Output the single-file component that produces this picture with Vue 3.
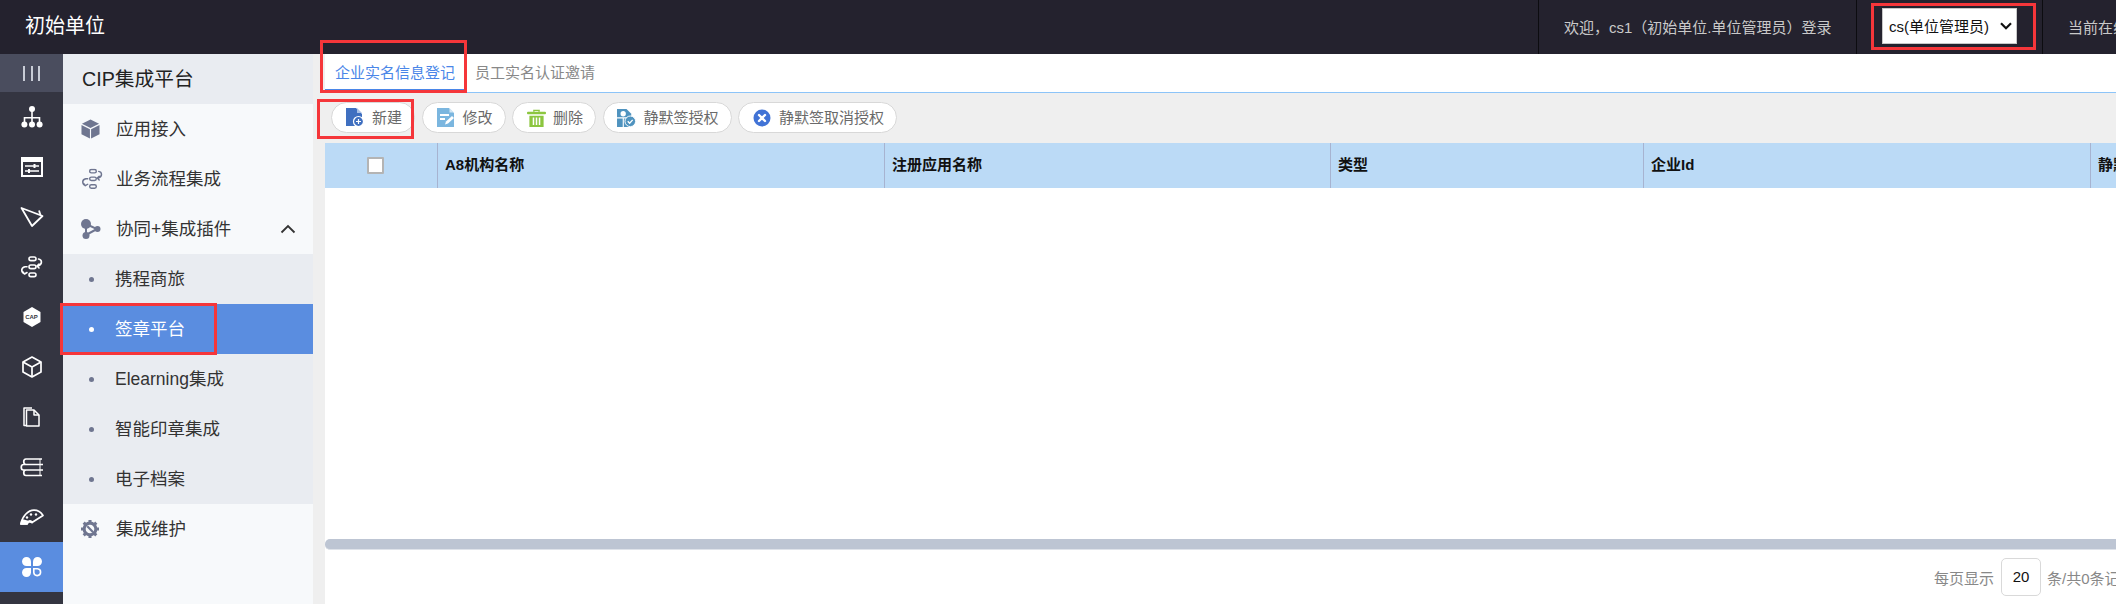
<script setup>
const subItems = [
  { label: '携程商旅' },
  { label: '签章平台', active: true },
  { label: 'Elearning集成' },
  { label: '智能印章集成' },
  { label: '电子档案' },
]
const columns = [
  { label: 'A8机构名称', width: 447 },
  { label: '注册应用名称', width: 446 },
  { label: '类型', width: 313 },
  { label: '企业Id', width: 447 },
  { label: '静默签授权状态', width: 300 },
]
</script>

<template>
  <div class="page">
    <header class="topbar">
      <div class="brand">初始单位</div>
      <div class="cell welcome">欢迎，cs1（初始单位.单位管理员）登录</div>
      <div class="cell role">
        <div class="select-wrap">
          <select class="role-select">
            <option>cs(单位管理员)</option>
          </select>
          <svg class="select-arrow" viewBox="0 0 12 8" width="12" height="8" fill="none" stroke="#111" stroke-width="2.200">
            <path d="M1 1.200 6 6.200l5-5" />
          </svg>
        </div>
      </div>
      <div class="cell online">当前在线人数</div>
    </header>

    <div class="body">
      <nav class="rail">
        <div class="rail-toggle"><i></i><i></i><i></i></div>

        <div class="rail-item">
          <svg viewBox="0 0 22 22" width="22" height="22" fill="none" stroke="#fff" stroke-width="1.6">
            <circle cx="11" cy="3" r="3" fill="#fff" stroke="none" />
            <path d="M11 5v6M3.500 16v-4.200h15V16M11 11v5" />
            <circle cx="3.400" cy="18.400" r="3" fill="#fff" stroke="none" />
            <circle cx="11" cy="18.400" r="3" fill="#fff" stroke="none" />
            <circle cx="18.600" cy="18.400" r="3" fill="#fff" stroke="none" />
          </svg>
        </div>
        <div class="rail-item">
          <svg viewBox="0 0 22 20" width="22" height="20" fill="none">
            <rect x="0" y="0" width="22" height="20" fill="#fff" />
            <rect x="2" y="5" width="18" height="13" fill="#343541" />
            <path d="M4 9h14M4 14h14" stroke="#fff" stroke-width="1.400" />
            <path d="M13.500 7v4M8 12v4" stroke="#fff" stroke-width="2" />
          </svg>
        </div>
        <div class="rail-item">
          <svg viewBox="0 0 24 22" width="24" height="22" fill="none" stroke="#fff" stroke-width="1.800" stroke-linejoin="round">
            <path d="M1.500 2 22.500 10 12 20Z" />
            <path d="M19 4.500 20.500 9" />
          </svg>
        </div>
        <div class="rail-item">
          <svg viewBox="0 0 24 22" width="24" height="22" fill="none" stroke="#fff" stroke-width="1.600" stroke-linecap="round" stroke-linejoin="round">
            <rect x="9" y="1" width="7" height="3.600" rx="1.800" />
            <rect x="9" y="9" width="7" height="3.600" rx="1.800" />
            <rect x="9" y="17" width="7" height="3.600" rx="1.800" />
            <path d="M18.500 3c3.500.5 4.500 5-.5 7h-1M19 8l-2 2 2 2" />
            <path d="M7 10.800h-2c-4.500 1-4 5.500-.5 7M2.500 15.500l2 2.500 2.500-1.500" />
          </svg>
        </div>
        <div class="rail-item">
          <div class="cap-mark">
            <svg viewBox="0 0 18 20" width="18" height="20"><path d="M9 0 17.500 5v10L9 20 .5 15V5Z" fill="#fff" /></svg>
            <span>CAP</span>
          </div>
        </div>
        <div class="rail-item">
          <svg viewBox="0 0 20 22" width="20" height="22" fill="none" stroke="#fff" stroke-width="1.700" stroke-linejoin="round">
            <path d="M10 1 19 6v10l-9 5-9-5V6Z" />
            <path d="M1 6l9 5 9-5M10 11v10" />
          </svg>
        </div>
        <div class="rail-item">
          <svg viewBox="0 0 17 20" width="17" height="20" fill="none" stroke="#fff" stroke-width="1.500" stroke-linejoin="round">
            <path d="M3 18.500H1V1h8" />
            <path d="M3.500 3H11l5 5v11H3.500Z" fill="#343541" />
            <path d="M11 3v5h5" />
          </svg>
        </div>
        <div class="rail-item">
          <svg viewBox="0 0 23 19" width="23" height="19" fill="none" stroke="#fff" stroke-width="1.700">
            <path d="M22 1H6C3 1 3 6.500 6 6.500M23 6.500H3.500C.5 6.500.5 12 3.500 12H23M6 12c-3 0-3 5.500 0 5.500h16" />
            <path d="M20 1v16.500" stroke-width="1" />
          </svg>
        </div>
        <div class="rail-item">
          <svg viewBox="0 0 24 16" width="24" height="16" fill="none" stroke="#fff" stroke-width="1.700" stroke-linejoin="round">
            <path d="M1 15C2 7.500 8 1.200 14 1.200c4 0 7 2 9 5.300l-11 7c-1-2-3.500-2-5 1.500Z" />
            <path d="M12 13.500c-1-2-3.500-2-5 1.500H1c.5-2 1-3 1.500-4Z" fill="#fff" />
            <circle cx="7" cy="8.500" r="1.200" fill="#fff" stroke="none" />
            <circle cx="11" cy="5.500" r="1.200" fill="#fff" stroke="none" />
            <circle cx="16" cy="5.500" r="1.200" fill="#fff" stroke="none" />
          </svg>
        </div>
        <div class="rail-item is-active">
          <svg viewBox="0 0 20 20" width="20" height="20" fill="#fff">
            <path d="M4.500 0C2 0 0 2 0 4.500S2 9 4.500 9H9V4.500C9 2 7 0 4.500 0Z" />
            <path d="M15.500 0C18 0 20 2 20 4.500S18 9 15.500 9H11V4.500C11 2 13 0 15.500 0Z" />
            <path d="M4.500 20C2 20 0 18 0 15.500S2 11 4.500 11H9v4.500C9 18 7 20 4.500 20Z" />
            <path d="M11.800 11.800h3.700a3.400 3.400 0 1 1-3.700 3.700Z" fill="none" stroke="#fff" stroke-width="1.600" />
          </svg>
        </div>
      </nav>

      <aside class="menu">
        <div class="menu-title">CIP集成平台</div>

        <div class="menu-row">
          <svg class="menu-icon" viewBox="0 0 20 21" width="19" height="20" fill="#6f7690">
            <path d="M10 .5 19 5l-9 4.500L1 5Z" />
            <path d="M.5 6.300 9.400 10.800V20.500L.5 16Z" />
            <path d="M19.500 6.300 10.600 10.800V20.500L19.500 16Z" />
          </svg>
          <span>应用接入</span>
        </div>
        <div class="menu-row">
          <svg class="menu-icon" viewBox="0 0 24 22" width="23" height="21" fill="none" stroke="#6f7690" stroke-width="1.500" stroke-linecap="round" stroke-linejoin="round">
            <rect x="9" y="1" width="7" height="3.600" rx="1.800" />
            <rect x="9" y="9" width="7" height="3.600" rx="1.800" />
            <rect x="9" y="17" width="7" height="3.600" rx="1.800" />
            <path d="M18.500 3c3.500.5 4.500 5-.5 7h-1M19 8l-2 2 2 2" />
            <path d="M7 10.800h-2c-4.500 1-4 5.500-.5 7M2.500 15.500l2 2.500 2.500-1.500" />
          </svg>
          <span>业务流程集成</span>
        </div>
        <div class="menu-row">
          <svg class="menu-icon" viewBox="0 0 20 20" width="20" height="20" fill="#6f7690" stroke="#6f7690">
            <path d="M5 5 16 10 5 16Z" fill="none" stroke-width="2" />
            <circle cx="5" cy="5" r="5" stroke="none" />
            <circle cx="16.500" cy="10" r="3" stroke="none" />
            <circle cx="5" cy="16.500" r="3.500" stroke="none" />
          </svg>
          <span>协同+集成插件</span>
          <svg class="chevron" viewBox="0 0 16 10" width="16" height="10" fill="none" stroke="#333" stroke-width="1.800">
            <path d="M1.500 8.500 8 2l6.500 6.500" />
          </svg>
        </div>

        <div class="submenu">
          <div v-for="item in subItems" :key="item.label" class="sub-row" :class="{ 'is-active': item.active }">
            <i class="dot"></i>
            <span>{{ item.label }}</span>
          </div>
        </div>

        <div class="menu-row">
          <svg class="menu-icon" viewBox="0 0 20 20" width="18" height="18" fill="none" stroke="#6f7690">
            <circle cx="10" cy="10" r="6.500" stroke-width="3.400" />
            <path d="M10 0v4M10 16v4M0 10h4M16 10h4M3 3l2.800 2.800M14.200 14.200 17 17M17 3l-2.800 2.800M5.800 14.200 3 17" stroke-width="3.400" />
            <path d="M7 7l6.500 6.500" stroke-width="2.400" />
          </svg>
          <span>集成维护</span>
        </div>
      </aside>

      <main class="main">
        <div class="tabs">
          <div class="tab is-active">企业实名信息登记</div>
          <div class="tab">员工实名认证邀请</div>
        </div>

        <div class="toolbar">
          <button class="tool" type="button">
            <span class="tool-icon">
              <svg viewBox="0 0 18 19" width="18" height="19">
                <path d="M0 0h10l6 6v12H0Z" fill="#3f6fc0" />
                <path d="M11 0v5h5Z" fill="#a9c0e6" />
                <circle cx="12.500" cy="13.500" r="5" fill="#3f6fc0" stroke="#fff" stroke-width="1.200" />
                <path d="M12.500 11v5M10 13.500h5" stroke="#fff" stroke-width="1.200" />
              </svg>
            </span>
            <span>新建</span>
          </button>
          <button class="tool" type="button">
            <span class="tool-icon">
              <svg viewBox="0 0 18 19" width="18" height="19">
                <path d="M0 0h12l5 5v14H0Z" fill="#7bb6df" />
                <path d="M12.500 0v4.500H17Z" fill="#d2e6f4" />
                <path d="M3 7h9M3 11h5" stroke="#fff" stroke-width="1.800" />
                <path d="M8 16.500l1-3L15 8l2 2-6 5.500Z" fill="#fff" />
              </svg>
            </span>
            <span>修改</span>
          </button>
          <button class="tool" type="button">
            <span class="tool-icon">
              <svg viewBox="0 0 20 19" width="19" height="18" fill="#8cc63f">
                <rect x="0" y="3" width="20" height="2.500" rx="1" />
                <path d="M6.500 3V.8h7V3h-1.600V2.200H8V3Z" />
                <path d="M2.500 7h15v12h-15ZM6 9v8h1.600V9Zm3.200 0v8h1.600V9Zm3.200 0v8H14V9Z" fill-rule="evenodd" />
              </svg>
            </span>
            <span>删除</span>
          </button>
          <button class="tool" type="button">
            <span class="tool-icon">
              <svg viewBox="0 0 20 19" width="19" height="18">
                <path d="M0 0h10l5 5v14H0Z" fill="#4f93bf" />
                <circle cx="6.500" cy="5" r="2.800" fill="#fff" />
                <path d="M0 8.800h15V10H0ZM6 10h1.200v9H6Z" fill="#fff" />
                <circle cx="14" cy="13" r="5.600" fill="#4f93bf" stroke="#fff" stroke-width="1" />
                <path d="M11.300 13l2 2 3.200-3.500" fill="none" stroke="#fff" stroke-width="1.400" />
              </svg>
            </span>
            <span>静默签授权</span>
          </button>
          <button class="tool" type="button">
            <span class="tool-icon">
              <svg viewBox="0 0 18 18" width="18" height="18">
                <circle cx="9" cy="9" r="8.500" fill="#4173d6" />
                <path d="M6 6l6 6M12 6l-6 6" stroke="#fff" stroke-width="2.400" stroke-linecap="round" />
              </svg>
            </span>
            <span>静默签取消授权</span>
          </button>
        </div>

        <div class="table-head">
          <div class="check-col"><i class="checkbox"></i></div>
          <div
            v-for="col in columns"
            :key="col.label"
            class="head-cell"
            :style="{ width: col.width + 'px' }"
          >{{ col.label }}</div>
        </div>

        <div class="table-body">
          <div class="scrollbar"></div>
        </div>

        <div class="pager">
          <span>每页显示</span>
          <span class="page-size">20</span>
          <span>条/共0条记录</span>
        </div>
      </main>
    </div>

    <i class="mark mark-tab"></i>
    <i class="mark mark-new"></i>
    <i class="mark mark-role"></i>
    <i class="mark mark-menu"></i>
  </div>
</template>

<style>
html, body { margin: 0; padding: 0; overflow: hidden; }
</style>

<style scoped>
.page {
  position: relative;
  width: 2116px;
  height: 604px;
  overflow: hidden;
  display: flex;
  flex-direction: column;
  font-family: "Liberation Sans", "Noto Sans CJK SC", sans-serif;
  font-size: 15px;
  background: #fff;
}

.topbar {
  flex: 0 0 54px;
  display: flex;
  background: #24222e;
  color: #c9c9c9;
  white-space: nowrap;
}
.brand {
  flex: 1;
  padding-left: 25px;
  line-height: 52px;
  font-size: 20px;
  color: #fff;
}
.cell {
  display: flex;
  align-items: center;
  border-left: 1px solid #0c0c10;
  overflow: hidden;
  box-sizing: border-box;
  padding-bottom: 2px;
}
.welcome { width: 318px; padding-left: 25px; }
.role { width: 186px; padding-left: 25px; }
.online { width: 74px; padding-left: 25px; }
.select-wrap {
  position: relative;
  width: 135px;
  height: 36px;
}
.role-select {
  width: 100%;
  height: 100%;
  appearance: none;
  background: #fff;
  border: 1px solid #c8c8c8;
  border-radius: 0;
  color: #111;
  font: 15px "Liberation Sans", "Noto Sans CJK SC", sans-serif;
  padding: 0 0 0 6px;
  box-sizing: border-box;
}
.select-arrow {
  position: absolute;
  left: 118px;
  top: 14px;
  pointer-events: none;
}

.body {
  flex: 1;
  min-height: 0;
  display: flex;
}

.rail {
  flex: 0 0 63px;
  background: #343541;
  display: flex;
  flex-direction: column;
}
.rail-toggle {
  flex: 0 0 38px;
  background: #4a4d5e;
  display: flex;
  align-items: center;
  justify-content: center;
  gap: 5.500px;
}
.rail-toggle i {
  width: 2px;
  height: 15px;
  background: #c8ccd6;
}
.rail-item {
  flex: 0 0 50px;
  display: flex;
  align-items: center;
  justify-content: center;
}
.rail-item.is-active { background: #5a8de0; }
.cap-mark {
  position: relative;
  width: 18px;
  height: 20px;
}
.cap-mark span {
  position: absolute;
  left: 0;
  right: 0;
  top: 5px;
  text-align: center;
  font-size: 6px;
  line-height: 10px;
  font-weight: 700;
  color: #343541;
}

.menu {
  flex: 0 0 250px;
  background: #f7f9fb;
  color: #333;
  font-size: 17.500px;
}
.menu-title {
  height: 50px;
  line-height: 50px;
  padding-left: 19px;
  background: #e9ecf1;
  font-size: 19.700px;
  color: #222;
}
.menu-row {
  position: relative;
  height: 50px;
  display: flex;
  align-items: center;
  padding-left: 53px;
  padding-bottom: 3px;
  box-sizing: border-box;
}
.menu-icon {
  position: absolute;
  left: 18px;
  top: 50%;
  transform: translateY(-50%);
}
.chevron {
  position: absolute;
  left: 217px;
  top: 20px;
}
.submenu { background: #e9ecf1; }
.sub-row {
  position: relative;
  height: 50px;
  display: flex;
  align-items: center;
  padding-left: 52px;
  padding-bottom: 3px;
  box-sizing: border-box;
}
.sub-row .dot {
  position: absolute;
  left: 26px;
  top: 22.500px;
  width: 5px;
  height: 5px;
  border-radius: 50%;
  background: #6f7690;
}
.sub-row.is-active {
  background: #5a8de0;
  color: #fff;
}
.sub-row.is-active .dot { background: #fff; }

.main {
  flex: 1;
  min-width: 0;
  background: #efefef;
  padding-left: 12px;
  display: flex;
  flex-direction: column;
}
.tabs {
  flex: 0 0 38px;
  display: flex;
  background: #fff;
  border-bottom: 1px solid #8cc4f8;
}
.tab {
  padding: 0 10px;
  line-height: 37px;
  color: #888;
  font-size: 15px;
}
.tab.is-active {
  color: #4a86e8;
  border-bottom: 3px solid #4a86e8;
  height: 35px;
}

.toolbar {
  flex: 0 0 50px;
  display: flex;
  align-items: center;
  gap: 6.500px;
  padding-left: 6px;
  padding-bottom: 1px;
  box-sizing: border-box;
}
.tool {
  height: 31px;
  display: flex;
  align-items: center;
  gap: 7px;
  padding: 0 12px 2px 13px;
  background: #fff;
  border: 1px solid #d8d8d8;
  border-radius: 16px;
  color: #6a6a6a;
  font: 15px "Liberation Sans", "Noto Sans CJK SC", sans-serif;
  box-sizing: border-box;
}
.tool-icon {
  flex: none;
  width: 20px;
  height: 19px;
  margin-top: 2px;
  display: flex;
  align-items: center;
  justify-content: center;
}

.table-head {
  flex: 0 0 45px;
  display: flex;
  align-items: stretch;
  background: #bbdaf6;
  color: #111;
  font-weight: 700;
  white-space: nowrap;
  overflow: hidden;
}
.check-col {
  flex: 0 0 112px;
  display: flex;
  align-items: center;
  justify-content: center;
  padding-right: 12px;
  box-sizing: border-box;
}
.checkbox {
  width: 13px;
  height: 13px;
  background: #fff;
  border: 2px solid #b4b4b4;
  border-radius: 1px;
}
.head-cell {
  flex: none;
  box-sizing: border-box;
  border-left: 1px solid #a7b3d0;
  padding-left: 7px;
  line-height: 44px;
}

.table-body {
  flex: 1;
  min-height: 0;
  background: #fff;
  display: flex;
  flex-direction: column;
  justify-content: flex-end;
}
.scrollbar {
  height: 10px;
  background: #bdc5d3;
  border-bottom: 1px solid #dfe3ea;
  border-radius: 5px 0 0 5px;
}

.pager {
  flex: 0 0 54px;
  display: flex;
  align-items: center;
  background: #fff;
  color: #888;
  white-space: nowrap;
  overflow: hidden;
  padding-left: 1609px;
  box-sizing: border-box;
}
.page-size {
  flex: none;
  width: 40px;
  height: 38px;
  margin: 0 6px 0 7px;
  border: 1px solid #d9d9d9;
  border-radius: 5px;
  box-sizing: border-box;
  text-align: center;
  line-height: 36px;
  color: #111;
  font-size: 15px;
}

.mark {
  position: absolute;
  box-sizing: border-box;
  border: 3px solid #f5363a;
  pointer-events: none;
}
.mark-tab { left: 320px; top: 40px; width: 147px; height: 53px; }
.mark-new { left: 317px; top: 99px; width: 97px; height: 40px; }
.mark-role { left: 1871px; top: 3px; width: 165px; height: 47px; }
.mark-menu { left: 60px; top: 303px; width: 157px; height: 52px; }
</style>
